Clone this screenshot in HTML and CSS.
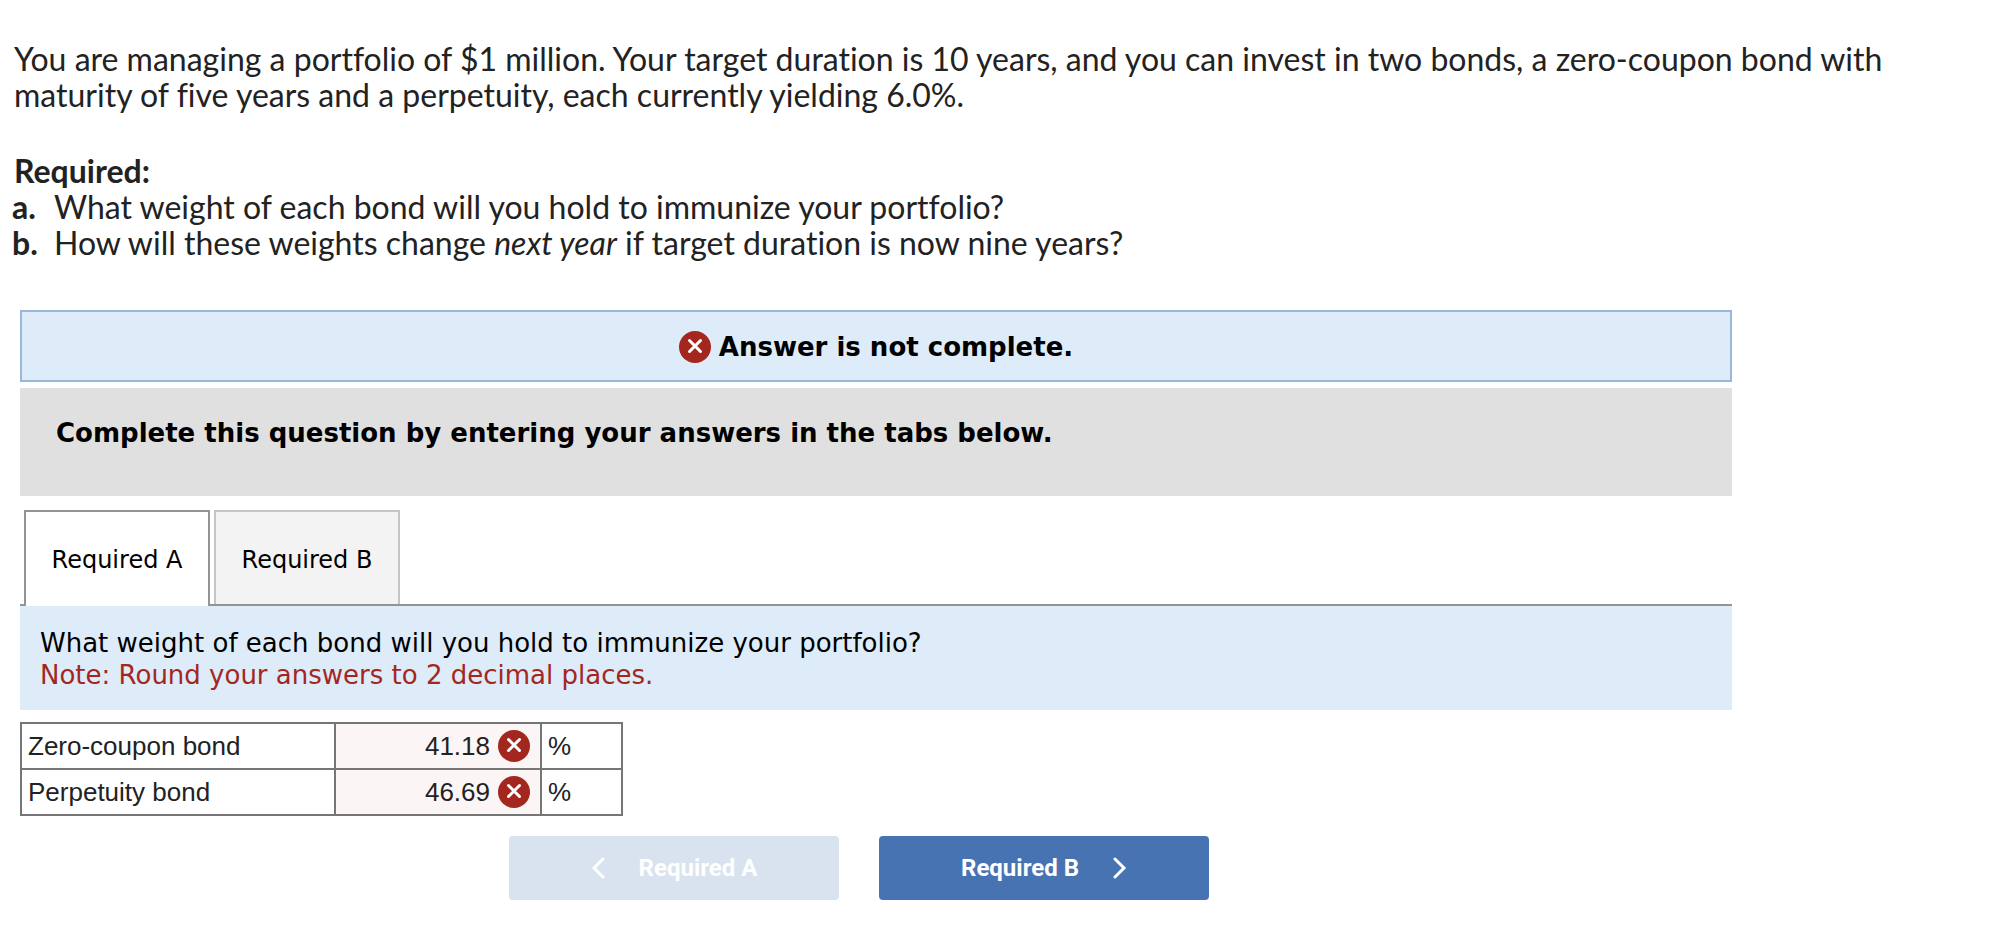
FILE: index.html
```html
<!DOCTYPE html>
<html lang="en">
<head>
<meta charset="utf-8">
<title>Portfolio immunization</title>
<link rel="stylesheet" href="styles.css">
</head>
<body>
<svg class="symbols" aria-hidden="true">
  <symbol id="wrong" viewBox="0 0 32 32">
    <circle cx="16" cy="16" r="16" fill="#a3271f"/>
    <path d="M10.500 9.500 21.500 20.500M21.500 9.500 10.500 20.500" fill="none" stroke="#fff" stroke-width="3" stroke-linecap="round"/>
  </symbol>
</svg>
<section class="prompt">
  <p class="intro">You are managing a portfolio of $1 million. Your target duration is 10 years, and you can invest in two bonds, a zero-coupon bond with maturity of five years and a perpetuity, each currently yielding 6.0%.</p>
  <h1 class="required">Required:</h1>
  <div class="part"><b class="letter">a.</b><span>What weight of each bond will you hold to immunize your portfolio?</span></div>
  <div class="part"><b class="letter">b.</b><span>How will these weights change <em>next year</em> if target duration is now nine years?</span></div>
</section>
<main class="answer">
  <div class="status">
    <svg class="mark" aria-hidden="true"><use href="#wrong"/></svg>
    <strong>Answer is not complete.</strong>
  </div>
  <h2 class="directions">Complete this question by entering your answers in the tabs below.</h2>
  <div class="tabs" role="tablist">
    <button class="tab active" type="button" role="tab" aria-selected="true">Required A</button>
    <button class="tab" type="button" role="tab" aria-selected="false">Required B</button>
  </div>
  <div class="question">
    <p>What weight of each bond will you hold to immunize your portfolio?</p>
    <p class="note">Note: Round your answers to 2 decimal places.</p>
  </div>
  <table class="entries">
    <tr>
      <th class="name" scope="row"><label for="zero">Zero-coupon bond</label></th>
      <td class="value"><div class="field"><input id="zero" type="text" value="41.18"><svg class="mark" role="img" aria-label="Incorrect"><use href="#wrong"/></svg></div></td>
      <td class="unit">%</td>
    </tr>
    <tr>
      <th class="name" scope="row"><label for="perp">Perpetuity bond</label></th>
      <td class="value"><div class="field"><input id="perp" type="text" value="46.69"><svg class="mark" role="img" aria-label="Incorrect"><use href="#wrong"/></svg></div></td>
      <td class="unit">%</td>
    </tr>
  </table>
  <nav class="steps">
    <button class="step" type="button" disabled><svg class="chevron" viewBox="0 0 14 22" aria-hidden="true"><path d="M12 2 3 11l9 9"/></svg>Required A</button>
    <button class="step" type="button">Required B<svg class="chevron" viewBox="0 0 14 22" aria-hidden="true"><path d="m2 2 9 9-9 9"/></svg></button>
  </nav>
</main>
</body>
</html>
```
FILE: styles.css
```css
* { box-sizing: border-box; }
body { margin: 0; padding: 41px 20px; background: #fff; color: #000; font-family: "DejaVu Sans", Verdana, sans-serif; font-size: 26px; line-height: 32px; }
p, h1, h2 { margin: 0; }
button, input { font: inherit; color: inherit; }

.symbols { display: none; }
.mark { flex: none; display: block; width: 32px; height: 32px; }

.prompt { margin: 0 -8px 49px; color: #222; font-family: Lato, sans-serif; font-size: 32px; line-height: 36px; font-variant-ligatures: none; }
.intro { padding-left: 2px; }
.required { padding-left: 2px; margin-top: 40px; font-size: inherit; font-weight: 700; }
.part { display: flex; }
.letter { flex: none; width: 42px; }

.answer { max-width: 1712px; }
.status { display: flex; align-items: center; justify-content: center; gap: 8px; min-height: 72px; padding-top: 2px; border: 2px solid #9ab7db; background: #deebf8; }
.directions { margin-top: 6px; padding: 29px 36px 47px; background: #e0e0e0; font-size: inherit; }

.tabs { display: flex; gap: 4px; margin-top: 14px; padding-left: 4px; border-bottom: 2px solid #949494; }
.tab { min-width: 186px; padding: 4px 20px 0; height: 94px; border: 2px solid #c5c5c5; border-bottom: 0; background: #f3f3f3; font-size: 24px; }
.tab.active { height: 96px; margin-bottom: -2px; padding-top: 2px; border-color: #949494; background: #fff; }

.question { padding: 21px 20px 19px; background: #deebf8; }
.note { color: #a3271f; }

.entries { table-layout: fixed; width: 603px; margin-top: 12px; border-collapse: collapse; color: #222; font-family: "Liberation Sans", Arial, sans-serif; }
.entries th, .entries td { height: 46px; padding: 0 6px; border: 2px solid #767676; font-weight: 400; text-align: left; }
.entries .name { width: 314px; }
.entries .value { width: 206px; padding: 0 10px; background: #fcf5f5; }
.field { display: flex; align-items: center; gap: 8px; }
.field input { flex: 1; min-width: 0; padding: 0; border: 0; background: none; text-align: right; }

.steps { display: flex; justify-content: center; gap: 40px; margin-top: 20px; padding-right: 34px; }
.step { display: flex; align-items: center; justify-content: center; gap: 34px; width: 330px; height: 64px; border: 0; border-radius: 4px; background: #4873b3; color: #fff; font-family: Roboto, sans-serif; font-size: 24px; font-weight: 700; }
.step:disabled { background: #d9e3ef; }
.chevron { width: 14px; height: 22px; fill: none; stroke: currentColor; stroke-width: 3; stroke-linecap: round; }
```
